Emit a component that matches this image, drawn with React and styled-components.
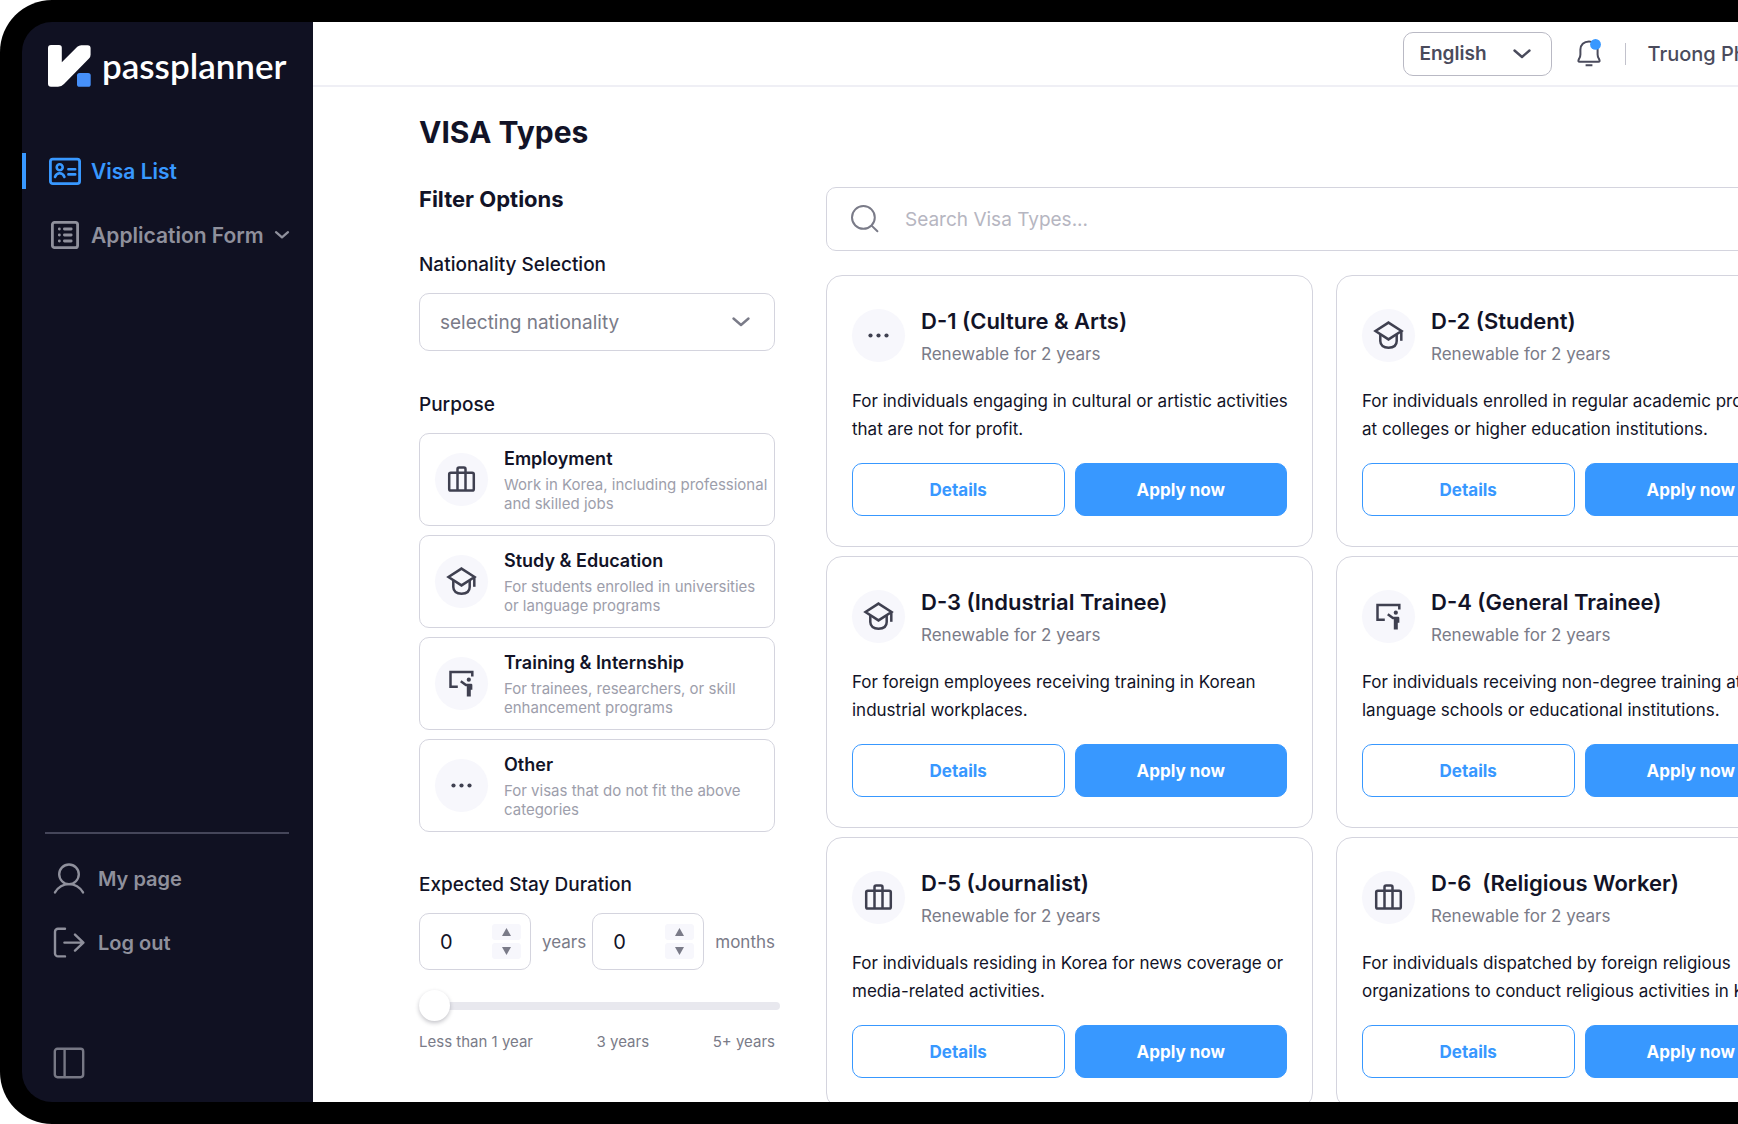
import React, { useState } from "react";
import styled, { createGlobalStyle } from "styled-components";

const purposes = [
  {
    id: "employment",
    icon: "work",
    title: "Employment",
    text: "Work in Korea, including professional and skilled jobs",
  },
  {
    id: "study",
    icon: "study",
    title: "Study & Education",
    text: "For students enrolled in universities or language programs",
  },
  {
    id: "training",
    icon: "training",
    title: "Training & Internship",
    text: "For trainees, researchers, or skill enhancement programs",
  },
  {
    id: "other",
    icon: "other",
    title: "Other",
    text: "For visas that do not fit the above categories",
  },
];

const visas = [
  {
    icon: "other",
    title: "D-1 (Culture & Arts)",
    text: "For individuals engaging in cultural or artistic activities that are not for profit.",
  },
  {
    icon: "study",
    title: "D-2 (Student)",
    text: "For individuals enrolled in regular academic programs at colleges or higher education institutions.",
  },
  {
    icon: "study",
    title: "D-3 (Industrial Trainee)",
    text: "For foreign employees receiving training in Korean industrial workplaces.",
  },
  {
    icon: "training",
    title: "D-4 (General Trainee)",
    text: "For individuals receiving non-degree training at language schools or educational institutions.",
  },
  {
    icon: "work",
    title: "D-5 (Journalist)",
    text: "For individuals residing in Korea for news coverage or media-related activities.",
  },
  {
    icon: "work",
    title: "D-6  (Religious Worker)",
    text: "For individuals dispatched by foreign religious organizations to conduct religious activities in Korea.",
  },
];

const CategoryIcon = ({ name }) => (
  <svg
    width="31"
    height="31"
    viewBox="-15.5 -15.5 31 31"
    fill="none"
    stroke="#3f4050"
    strokeWidth="2.5"
    aria-hidden="true"
  >
    {name === "work" && (
      <>
        <rect x="-12.3" y="-6.7" width="24.6" height="17.8" rx="1.6" />
        <path d="M-4 11V-10.3a1.6 1.6 0 0 1 1.6-1.6H2.4A1.6 1.6 0 0 1 4-10.3V11" />
      </>
    )}
    {name === "study" && (
      <>
        <path d="M0-12.9 13-4.5 0 3.9-13-4.5Z" />
        <path d="M-8.2-1.5V5.5C-8.2 9.8-5 12.2 0 12.2S8.2 9.8 8.2 5.5V-1.5" />
        <path d="M12.8-4.5V5.3" />
      </>
    )}
    {name === "training" && (
      <>
        <path d="M-3.7 3.2H-11V-11.6H10.8V-7" />
        <circle cx="7.3" cy="-3.8" r="2.1" fill="#3f4050" stroke="none" />
        <path d="M-.7-2.2 4.4 1.6H9.6V6.2" strokeLinejoin="round" />
        <path d="M7.3 1.4V13" strokeWidth="4" />
      </>
    )}
    {name === "other" && (
      <g fill="#3f4050" stroke="none">
        <circle cx="-8" r="2.1" />
        <circle r="2.1" />
        <circle cx="8" r="2.1" />
      </g>
    )}
  </svg>
);

const Chevron = ({ size = 20, width = 2.4 }) => (
  <svg
    width={size}
    height={size}
    viewBox="0 0 20 20"
    fill="none"
    stroke="currentColor"
    strokeWidth={width}
    strokeLinecap="round"
    strokeLinejoin="round"
    aria-hidden="true"
  >
    <path d="M2.5 6.5 10 13l7.5-6.5" />
  </svg>
);

const LogoMark = () => (
  <svg width="43" height="42" viewBox="0 0 43 42" aria-hidden="true">
    <path
      d="M3 0h8a2.8 2.8 0 0 1 2.8 2.8V17.2L29.3 1.8Q31 .2 33.3.2H39.6A3 3 0 0 1 42.6 3.2V9.8Q42.6 12 41 13.6L16 38.9Q13.2 41.8 10 41.8H3a3 3 0 0 1-3-3V3a3 3 0 0 1 3-3Z"
      fill="#fff"
    />
    <rect x="29" y="28" width="13.7" height="13.8" rx="2.6" fill="#4690fa" />
  </svg>
);

const VisaListIcon = () => (
  <svg
    width="32"
    height="28"
    viewBox="0 0 32 28"
    fill="none"
    stroke="currentColor"
    strokeWidth="2.6"
    strokeLinecap="round"
    aria-hidden="true"
  >
    <rect x="1.4" y="2.2" width="29.2" height="24.4" rx="2.4" strokeWidth="2.8" />
    <circle cx="10.7" cy="10.2" r="3" />
    <path d="M6 20c.9-2.6 2.6-3.7 4.7-3.7s3.8 1.1 4.7 3.7" />
    <path d="M19.4 12.2h6.8M19.4 17.4h6.8" />
  </svg>
);

const FormIcon = () => (
  <svg
    width="32"
    height="28"
    viewBox="0 0 32 28"
    fill="none"
    stroke="currentColor"
    strokeWidth="2.8"
    strokeLinecap="round"
    aria-hidden="true"
  >
    <rect x="3.4" y="1.4" width="25.2" height="25.2" rx="2.2" />
    <path d="M15.4 8h6.8M15.4 14h6.8M15.4 20h6.8M10.3 8h.1M10.3 14h.1M10.3 20h.1" />
  </svg>
);

const UserIcon = () => (
  <svg
    width="32"
    height="32"
    viewBox="0 0 32 32"
    fill="none"
    stroke="currentColor"
    strokeWidth="2.4"
    strokeLinecap="round"
    aria-hidden="true"
  >
    <circle cx="16" cy="11.3" r="9.8" />
    <path d="M2 29.4C5 24.4 10 21.1 16 21.1s11 3.3 14 8.3" />
  </svg>
);

const LogoutIcon = () => (
  <svg
    width="32"
    height="32"
    viewBox="0 0 32 32"
    fill="none"
    stroke="currentColor"
    strokeWidth="2.4"
    strokeLinecap="round"
    strokeLinejoin="round"
    aria-hidden="true"
  >
    <path d="M12 1.8H5A3 3 0 0 0 2 4.8V26.4a3 3 0 0 0 3 3h7" />
    <path d="M11.4 15.6H30M22 7.6l8.4 8-8.4 8" />
  </svg>
);

const PanelIcon = () => (
  <svg
    width="32"
    height="32"
    viewBox="0 0 32 32"
    fill="none"
    stroke="currentColor"
    strokeWidth="2.4"
    aria-hidden="true"
  >
    <rect x="1.8" y="1.8" width="28.4" height="28.4" rx="2.6" />
    <path d="M11.6 2v28" />
  </svg>
);

const BellIcon = () => (
  <svg
    width="28"
    height="32"
    viewBox="0 0 28 32"
    fill="none"
    stroke="#4a4b5c"
    strokeWidth="2"
    strokeLinejoin="round"
    aria-hidden="true"
  >
    <path d="M14 3.4c-5.2 0-8.6 3.5-8.6 8.2v4.8c0 1.6-.4 2.7-1.2 4.2-.8 1.4-1 1.9-.8 2.5.2.5.6.7 1.3.7h18.6c.7 0 1.1-.2 1.3-.7.2-.6 0-1.1-.8-2.5-.8-1.5-1.2-2.6-1.2-4.2v-4.8c0-4.7-3.4-8.2-8.6-8.2Z" />
    <path d="M10.6 27.2h6.8" />
    <circle cx="20.5" cy="6.4" r="5.4" fill="#3898ff" stroke="none" />
  </svg>
);

const SearchIcon = () => (
  <svg
    width="30"
    height="30"
    viewBox="0 0 30 30"
    fill="none"
    stroke="#7a7b88"
    strokeWidth="2"
    strokeLinecap="round"
    aria-hidden="true"
  >
    <circle cx="13.4" cy="13.4" r="11.4" />
    <path d="m21.6 21.6 5.8 5.6" />
  </svg>
);

const Stepper = ({ id, unit }) => {
  const [value, setValue] = useState(0);
  return (
    <StepperGroup>
      <StepperBox>
        <StepperInput
          id={id}
          type="number"
          min="0"
          value={value}
          onChange={(e) => setValue(Number(e.target.value))}
        />
        <StepperButtons>
          <StepButton
            type="button"
            aria-label={`Increase ${unit}`}
            onClick={() => setValue(value + 1)}
          >
            <svg width="9" height="8" viewBox="0 0 9 8" aria-hidden="true">
              <path d="M4.5 0 9 8H0Z" fill="currentColor" />
            </svg>
          </StepButton>
          <StepButton
            type="button"
            aria-label={`Decrease ${unit}`}
            onClick={() => setValue(Math.max(0, value - 1))}
          >
            <svg width="9" height="8" viewBox="0 0 9 8" aria-hidden="true">
              <path d="M0 0h9L4.5 8Z" fill="currentColor" />
            </svg>
          </StepButton>
        </StepperButtons>
      </StepperBox>
      <Unit htmlFor={id}>{unit}</Unit>
    </StepperGroup>
  );
};

const Sidebar = () => (
  <SidebarWrapper>
    <Logo href="#">
      <LogoMark />
      passplanner
    </Logo>
    <Nav aria-label="Main">
      <NavLink href="#visa" $active>
        <VisaListIcon />
        Visa List
      </NavLink>
      <NavLink href="#form">
        <FormIcon />
        Application Form
        <Chevron size={16} width={2.8} />
      </NavLink>
    </Nav>
    <SidebarBottom>
      <FooterLink href="#mypage">
        <UserIcon />
        My page
      </FooterLink>
      <FooterLink href="#logout">
        <LogoutIcon />
        Log out
      </FooterLink>
    </SidebarBottom>
    <CollapseButton type="button" aria-label="Collapse sidebar">
      <PanelIcon />
    </CollapseButton>
  </SidebarWrapper>
);

const Header = () => (
  <HeaderWrapper>
    <LanguageBox>
      <LanguageSelect aria-label="Language" defaultValue="en">
        <option value="en">English</option>
      </LanguageSelect>
      <Chevron />
    </LanguageBox>
    <BellButton type="button" aria-label="Notifications">
      <BellIcon />
    </BellButton>
    <Divider />
    <UserName href="#profile">Truong Pham</UserName>
  </HeaderWrapper>
);

const Filters = () => {
  const [stay, setStay] = useState(0);
  return (
    <FilterWrapper>
      <FilterTitle>Filter Options</FilterTitle>
      <FieldLabel as="label" htmlFor="nationality">
        Nationality Selection
      </FieldLabel>
      <NationalityBox>
        <NationalitySelect id="nationality" defaultValue="">
          <option value="">selecting nationality</option>
        </NationalitySelect>
        <Chevron />
      </NationalityBox>
      <FieldLabel>Purpose</FieldLabel>
      <PurposeList>
        {purposes.map((item) => (
          <PurposeCard key={item.id} type="button">
            <IconCircle>
              <CategoryIcon name={item.icon} />
            </IconCircle>
            <span>
              <PurposeTitle>{item.title}</PurposeTitle>
              <PurposeText>{item.text}</PurposeText>
            </span>
          </PurposeCard>
        ))}
      </PurposeList>
      <FieldLabel>Expected Stay Duration</FieldLabel>
      <StayRow>
        <Stepper id="years" unit="years" />
        <Stepper id="months" unit="months" />
      </StayRow>
      <Range
        type="range"
        min="0"
        max="5"
        value={stay}
        aria-label="Expected stay duration"
        onChange={(e) => setStay(Number(e.target.value))}
      />
      <RangeLabels>
        <span>Less than 1 year</span>
        <span>3 years</span>
        <span>5+ years</span>
      </RangeLabels>
    </FilterWrapper>
  );
};

const VisaCard = ({ visa }) => (
  <Card>
    <CardHead>
      <IconCircle>
        <CategoryIcon name={visa.icon} />
      </IconCircle>
      <div>
        <CardTitle>{visa.title}</CardTitle>
        <CardSub>Renewable for 2 years</CardSub>
      </div>
    </CardHead>
    <CardText>{visa.text}</CardText>
    <CardActions>
      <ActionButton type="button">Details</ActionButton>
      <ActionButton type="button" $primary>
        Apply now
      </ActionButton>
    </CardActions>
  </Card>
);

const App = () => {
  return (
    <>
      <GlobalStyle />
      <Device>
        <Screen>
          <Sidebar />
          <Content>
            <Header />
            <Main>
              <PageTitle>VISA Types</PageTitle>
              <Columns>
                <Filters />
                <Results>
                  <SearchBox>
                    <SearchIcon />
                    <SearchInput
                      type="search"
                      aria-label="Search visa types"
                      placeholder="Search Visa Types..."
                    />
                  </SearchBox>
                  <CardGrid>
                    {visas.map((visa) => (
                      <VisaCard key={visa.title} visa={visa} />
                    ))}
                  </CardGrid>
                </Results>
              </Columns>
            </Main>
          </Content>
        </Screen>
      </Device>
    </>
  );
};

export default App;

const GlobalStyle = createGlobalStyle`
  * {
    box-sizing: border-box;
  }
  body {
    margin: 0;
    overflow: hidden;
    background: #fff;
    color: #121327;
    font-family: Inter, "Noto Sans CJK KR", sans-serif;
  }
  h1, h2, h3, p {
    margin: 0;
  }
  button, input, select {
    font-family: inherit;
    color: inherit;
  }
  button {
    cursor: pointer;
  }
  a {
    text-decoration: none;
  }
  svg {
    flex-shrink: 0;
    display: block;
  }
`;

/* the device runs past the right edge of the window */
const Device = styled.div`
  width: calc(100% + 213px);
  height: 100vh;
  padding: 22px;
  border-radius: 52px;
  background: #000;
`;

const Screen = styled.div`
  display: flex;
  height: 100%;
  border-radius: 30px;
  overflow: hidden;
`;

const SidebarWrapper = styled.aside`
  display: flex;
  flex-direction: column;
  flex: 0 0 291px;
  padding: 23px 0 23px;
  background: #101122;
  color: #8f909c;
`;

const Logo = styled.a`
  display: flex;
  align-items: flex-start;
  gap: 11px;
  height: 42px;
  padding-left: 26px;
  color: #fff;
  font-family: Lato, sans-serif;
  font-size: 35px;
  line-height: 40px;
  font-weight: 600;
`;

const Nav = styled.nav`
  display: flex;
  flex-direction: column;
  gap: 28px;
  margin-top: 66px;
`;

const NavLink = styled.a`
  display: flex;
  align-items: center;
  gap: 10px;
  height: 36px;
  padding-left: 23px;
  border-left: 4px solid ${({ $active }) => ($active ? "#3898ff" : "transparent")};
  color: ${({ $active }) => ($active ? "#3898ff" : "#8f909c")};
  font-size: 21px;
  font-weight: 600;
  white-space: nowrap;
`;

const SidebarBottom = styled.div`
  display: flex;
  flex-direction: column;
  gap: 28px;
  margin: auto 24px 0 23px;
  padding-top: 27px;
  border-top: 2px solid #45465a;
`;

const FooterLink = styled.a`
  display: flex;
  align-items: center;
  gap: 13px;
  height: 36px;
  padding-left: 8px;
  color: #8f909c;
  font-size: 20px;
  font-weight: 600;
`;

const CollapseButton = styled.button`
  display: flex;
  align-self: flex-start;
  margin: 86px 0 0 31px;
  padding: 0;
  border: 0;
  background: none;
  color: #777885;
`;

const Content = styled.div`
  flex: 1;
  min-width: 0;
  background: #fff;
`;

const HeaderWrapper = styled.header`
  display: flex;
  align-items: center;
  justify-content: flex-end;
  height: 65px;
  padding-right: 154px;
  border-bottom: 2px solid #efeff5;
  color: #4a4b5c;
`;

const LanguageBox = styled.div`
  position: relative;
  width: 149px;
  height: 44px;

  svg {
    position: absolute;
    right: 20px;
    top: 12px;
    pointer-events: none;
  }
`;

const LanguageSelect = styled.select`
  appearance: none;
  width: 100%;
  height: 100%;
  padding: 0 15px;
  border: 1px solid #b9b9c4;
  border-radius: 10px;
  background: none;
  font-size: 19px;
  font-weight: 600;
`;

const BellButton = styled.button`
  display: flex;
  margin: 0 22px 0 23px;
  padding: 0;
  border: 0;
  background: none;
`;

const Divider = styled.span`
  width: 1px;
  height: 22px;
  margin-right: 21px;
  background: #c2c2cc;
`;

const UserName = styled.a`
  color: inherit;
  font-size: 20px;
  font-weight: 500;
  white-space: nowrap;
`;

const Main = styled.main`
  padding: 24px 106px 0;
`;

const PageTitle = styled.h1`
  font-size: 30px;
  line-height: 42px;
  font-weight: 700;
`;

const Columns = styled.div`
  display: flex;
  align-items: flex-start;
  gap: 51px;
  margin-top: 34px;
`;

const FilterWrapper = styled.section`
  flex: 0 0 356px;
  min-width: 0;
`;

const FilterTitle = styled.h2`
  margin-bottom: 40px;
  font-size: 22px;
  line-height: 25px;
  font-weight: 700;
`;

const FieldLabel = styled.h3`
  display: block;
  margin-bottom: 15px;
  font-size: 19px;
  line-height: 26px;
  font-weight: 500;
`;

const NationalityBox = styled.div`
  position: relative;
  height: 58px;
  margin-bottom: 41px;
  color: #7a7b88;

  svg {
    position: absolute;
    right: 24px;
    top: 19px;
    pointer-events: none;
  }
`;

const NationalitySelect = styled.select`
  appearance: none;
  width: 100%;
  height: 100%;
  padding: 0 20px;
  border: 1px solid #d4d4de;
  border-radius: 10px;
  background: none;
  font-size: 19px;
`;

const PurposeList = styled.div`
  display: flex;
  flex-direction: column;
  gap: 9px;
  margin-bottom: 40px;
`;

const PurposeCard = styled.button`
  display: flex;
  align-items: center;
  gap: 16px;
  height: 93px;
  padding: 0 4px 0 15px;
  border: 1px solid #d4d4de;
  border-radius: 10px;
  background: #fff;
  text-align: left;
`;

const IconCircle = styled.span`
  display: flex;
  align-items: center;
  justify-content: center;
  flex: 0 0 53px;
  height: 53px;
  border-radius: 50%;
  background: #f7f7fc;
`;

const PurposeTitle = styled.span`
  display: block;
  margin-bottom: 4px;
  font-size: 18px;
  line-height: 24px;
  font-weight: 600;
`;

const PurposeText = styled.span`
  display: block;
  color: #9d9eab;
  font-size: 15px;
  line-height: 19px;
`;

const StayRow = styled.div`
  display: flex;
  justify-content: space-between;
`;

const StepperGroup = styled.div`
  display: flex;
  align-items: center;
  gap: 11px;
`;

const StepperBox = styled.div`
  display: flex;
  align-items: center;
  justify-content: space-between;
  width: 112px;
  height: 57px;
  padding: 0 9px 0 20px;
  border: 1px solid #d4d4de;
  border-radius: 10px;
`;

const StepperInput = styled.input`
  appearance: textfield;
  width: 36px;
  padding: 0;
  border: 0;
  background: none;
  font-size: 20px;

  &::-webkit-inner-spin-button {
    display: none;
  }
`;

const StepperButtons = styled.div`
  display: flex;
  flex-direction: column;
  gap: 3px;
`;

const StepButton = styled.button`
  display: flex;
  align-items: center;
  justify-content: center;
  width: 29px;
  height: 16px;
  padding: 0;
  border: 0;
  border-radius: 3px;
  background: #f7f7fc;
  color: #7a7b88;
`;

const Unit = styled.label`
  color: #7a7b88;
  font-size: 17px;
`;

const Range = styled.input`
  appearance: none;
  display: block;
  width: 361px;
  height: 31px;
  margin: 20px 0 0;
  background: none;

  &::-webkit-slider-runnable-track {
    height: 8px;
    border-radius: 4px;
    background: #e8e8ee;
  }

  &::-webkit-slider-thumb {
    appearance: none;
    width: 31px;
    height: 31px;
    margin-top: -12px;
    border-radius: 50%;
    background: #fff;
    box-shadow: 0 2px 4px rgba(18, 19, 39, 0.25);
  }
`;

const RangeLabels = styled.div`
  display: flex;
  justify-content: space-between;
  margin-top: 10px;
  color: #7a7b88;
  font-size: 15px;
  line-height: 22px;
`;

const Results = styled.section`
  flex: 1;
  min-width: 0;
`;

const SearchBox = styled.div`
  display: flex;
  align-items: center;
  gap: 25px;
  height: 64px;
  padding-left: 23px;
  border: 1px solid #d4d4de;
  border-radius: 10px;
`;

const SearchInput = styled.input`
  flex: 1;
  height: 100%;
  padding: 0;
  border: 0;
  outline: 0;
  background: none;
  font-size: 19px;

  &::placeholder {
    color: #b6b6c1;
  }
`;

const CardGrid = styled.div`
  display: grid;
  grid-template-columns: 1fr 1fr;
  gap: 9px 23px;
  margin-top: 24px;
`;

const Card = styled.article`
  padding: 30px 25px;
  border: 1px solid #d4d4de;
  border-radius: 16px;
`;

const CardHead = styled.div`
  display: flex;
  align-items: center;
  gap: 16px;
`;

const CardTitle = styled.h2`
  font-size: 22px;
  line-height: 30px;
  font-weight: 600;
  white-space: pre;
`;

const CardSub = styled.p`
  margin-top: 7px;
  color: #7a7b88;
  font-size: 17px;
  line-height: 22px;
`;

const CardText = styled.p`
  margin: 22px -6px 20px 0;
  font-size: 17px;
  line-height: 28px;
`;

const CardActions = styled.div`
  display: flex;
  gap: 10px;
`;

const ActionButton = styled.button`
  flex: 1;
  height: 53px;
  border: 1px solid #3898ff;
  border-radius: 10px;
  background: ${({ $primary }) => ($primary ? "#3898ff" : "#fff")};
  color: ${({ $primary }) => ($primary ? "#fff" : "#3898ff")};
  font-size: 17px;
  font-weight: 700;
`;
